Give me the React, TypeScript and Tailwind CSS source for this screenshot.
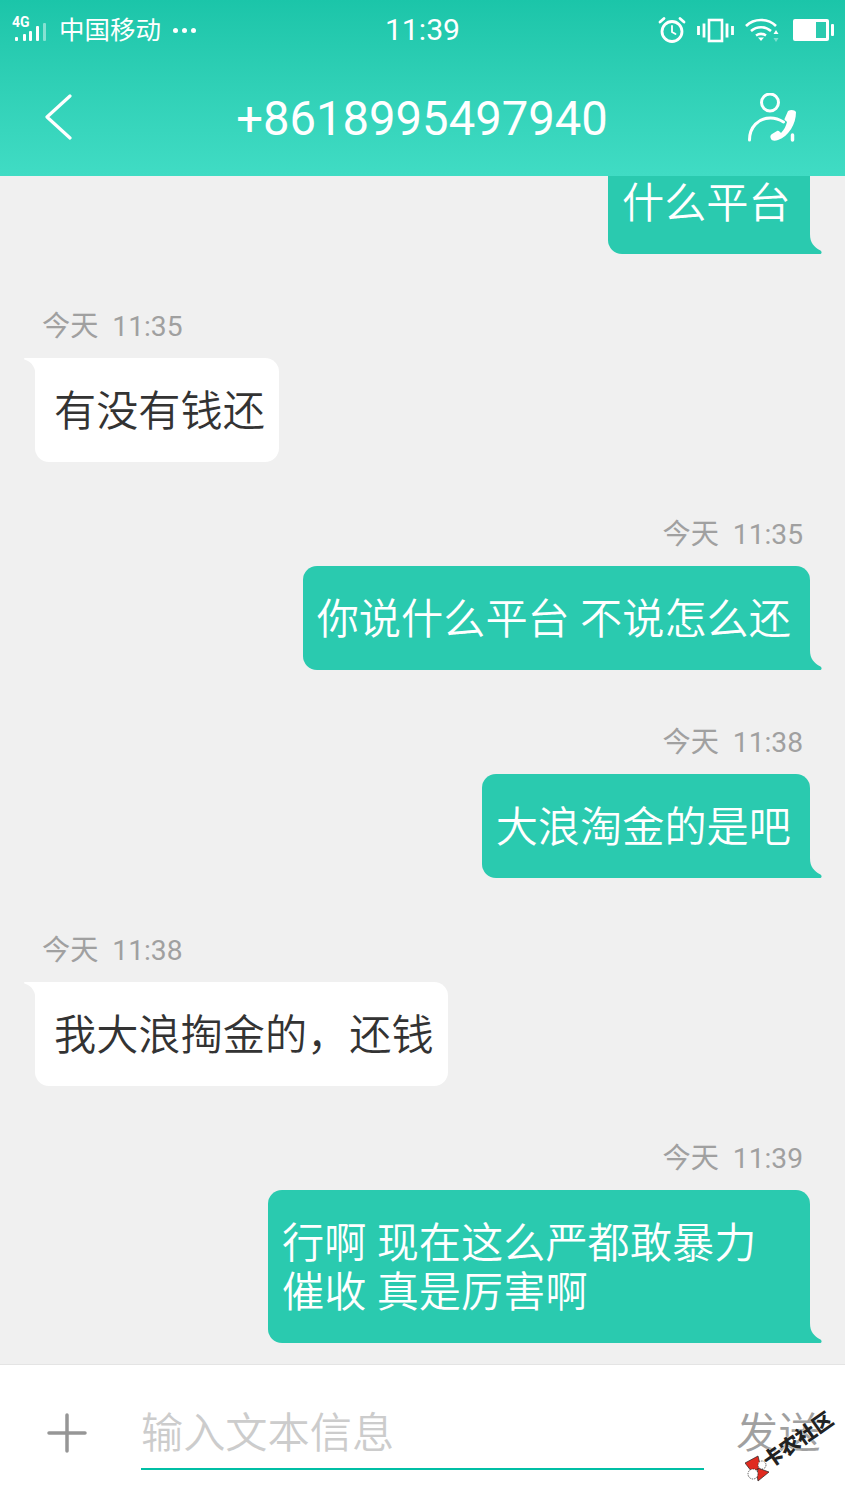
const cjk = "font-['Roboto','Noto_Sans_CJK_SC',sans-serif]";

const StatusLeft = () => (
  <div className="flex items-center">
    <div className="relative w-[36px] h-[26px] ml-[11px]">
      <span className="absolute left-[1px] -top-[3px] text-[14px] leading-[16px] font-bold text-white font-['Roboto',sans-serif]">4G</span>
      <svg width="36" height="26" viewBox="0 0 36 26" className="absolute left-0 top-0">
        <rect x="4" y="20" width="3" height="4" rx="1" fill="#fff" />
        <rect x="12" y="17" width="3" height="7" rx="1" fill="#fff" />
        <rect x="18" y="14" width="3" height="10" rx="1" fill="#fff" />
        <rect x="25" y="9" width="3" height="15" rx="1" fill="#fff" />
        <rect x="32" y="6" width="3" height="18" rx="1" fill="#fff" opacity=".45" />
      </svg>
    </div>
    <span className="ml-[12px] text-[25.5px] leading-[30px] text-white">中国移动</span>
    <div className="ml-[12px] flex gap-[4px]">
      <span className="w-[5px] h-[5px] rounded-full bg-white" />
      <span className="w-[5px] h-[5px] rounded-full bg-white" />
      <span className="w-[5px] h-[5px] rounded-full bg-white" />
    </div>
  </div>
);

const StatusRight = () => (
  <div className="flex items-center justify-end pr-[11px] gap-[11px]">
    <svg width="28" height="28" viewBox="0 0 28 28" fill="none" stroke="#fff" strokeLinecap="round" className="-ml-[1px]">
      <circle cx="14" cy="15.500" r="10" strokeWidth="2.800" />
      <path d="M14 10v6l3.500 2" strokeWidth="1.800" />
      <path d="M2 6l4-3.500M26 6l-4-3.500" strokeWidth="2.800" />
    </svg>
    <svg width="37" height="26" viewBox="0 0 37 26" fill="none" stroke="#fff">
      <rect x="12" y="3" width="13" height="21" strokeWidth="2.600" />
      <path d="M1.500 9v9M7 6.500v14M30 6.500v14M35.500 9v9" strokeWidth="2.800" />
    </svg>
    <svg width="36" height="26" viewBox="0 0 36 26" fill="none" stroke="#fff" strokeWidth="2.600" className="-ml-[1px]">
      <path d="M2 9C10 1 24 1 32 9" />
      <path d="M7 14c6-5 14-5 20 0" />
      <path d="M12 18.500c3-2 7-2 10 0" />
      <path d="M14 20.500h6l-3 3.500z" fill="#fff" stroke="none" />
      <path d="M32 13l2.500 4h-5z" fill="#fff" stroke="none" />
      <path d="M32 25l2.500-4h-5z" fill="#fff" opacity=".4" stroke="none" />
    </svg>
    <svg width="41" height="22" viewBox="0 0 41 22" className="ml-[2px]">
      <rect x="0" y="0" width="36" height="22" rx="2" fill="#fff" />
      <rect x="23" y="3" width="10" height="16" fill="#2acaaf" />
      <rect x="38" y="5" width="3" height="12" rx="1" fill="#fff" />
    </svg>
  </div>
);

const Header = () => (
  <header className="h-[176px] shrink-0 bg-gradient-to-b from-[#1bc5a9] to-[#40dcc4] text-white">
    <div className="h-[60px] grid grid-cols-3 items-center">
      <StatusLeft />
      <div className="text-center text-[30.2px] leading-[36px]">11:39</div>
      <StatusRight />
    </div>
    <div className="h-[116px] flex items-center justify-between pl-[45px] pr-[47px]">
      <div className="w-[50px] -mt-[2px]">
        <svg width="28" height="46" viewBox="0 0 28 46" fill="none" stroke="#fff" strokeWidth="3.200" strokeLinecap="round" strokeLinejoin="round">
          <path d="M25 2L2 23l23 21" />
        </svg>
      </div>
      <h1 className="text-[47.2px] leading-[56px] font-normal mt-[2px] ml-[1px]">+8618995497940</h1>
      <svg width="50" height="50" viewBox="0 0 50 50" fill="none" stroke="#fff" strokeWidth="3" strokeLinecap="round">
        <ellipse cx="22" cy="9.500" rx="8.500" ry="8.500" />
        <path d="M1.500 47c0-13 9-22 21-22 5 0 9 1.500 13 4" />
        <path d="M40 18c3-2 7-1 8 1 0 12-7 24-18 28-3 1-6 1-7-1-1-2-1-4 1-5l5-3c1-.500 2 0 3 1l1 1c3-3 5-7 6-11l-1-1c-1-.500-1.500-1-1.500-2z" fill="#fff" stroke="none" />
        <path d="M44.500 42v5" strokeWidth="3.500" />
      </svg>
    </div>
  </header>
);

type Msg = { side: "in" | "out"; time?: string; w?: string; lines: string[] };

const msgs: Msg[] = [
  { side: "out", w: "w-[202px]", lines: ["什么平台"] },
  { side: "in", time: "今天  11:35", lines: ["有没有钱还"] },
  { side: "out", time: "今天  11:35", lines: ["你说什么平台 不说怎么还"] },
  { side: "out", time: "今天  11:38", lines: ["大浪淘金的是吧"] },
  { side: "in", time: "今天  11:38", lines: ["我大浪掏金的，还钱"] },
  { side: "out", time: "今天  11:39", w: "w-[542px]", lines: ["行啊 现在这么严都敢暴力", "催收 真是厉害啊"] },
];

const Bubble = ({ m }: { m: Msg }) => {
  if (m.side === "in") {
    return (
      <div className="relative self-start ml-[35px] bg-white rounded-[14px] rounded-tl-none pl-[19px] pr-[14px] pt-[29px] pb-[26px] text-[#333] text-[42.2px] leading-[49px] font-[350]">
        <svg width="12" height="18" viewBox="0 0 12 18" className="absolute -left-[11px] top-0">
          <path d="M12 0H1C0 0-.5 1 .5 1.500 5 3 11 6 12 18z" fill="#fff" />
        </svg>
        {m.lines.map((l) => <div key={l} className="whitespace-pre">{l}</div>)}
      </div>
    );
  }
  return (
    <div className={`relative self-end mr-[35px] bg-[#2acaaf] rounded-[14px] rounded-br-none pl-[14px] pr-[19px] pt-[29px] pb-[26px] text-white text-[42.2px] leading-[49px] font-[350] ${m.w ?? ""}`}>
      <svg width="13" height="20" viewBox="0 0 13 20" className="absolute -right-[12px] bottom-0">
        <path d="M0 0h1c0 9 4 13 10.500 16.500 1.500 1 1.500 3.500-.5 3.500H0z" fill="#2acaaf" />
      </svg>
      {m.lines.map((l) => <div key={l} className="whitespace-pre">{l}</div>)}
    </div>
  );
};

const Input = () => (
  <footer className="relative h-[136px] shrink-0 bg-white border-t border-[#e4e4e4] flex items-start">
    <svg width="40" height="40" viewBox="0 0 40 40" stroke="#969696" strokeWidth="3.500" strokeLinecap="round" className="ml-[47px] mt-[48px] shrink-0">
      <path d="M20 2v36M2 20h36" />
    </svg>
    <div className="ml-[54px] w-[563px] h-[105px] border-b-2 border-[#00bfa5] pt-[44px]">
      <span className="text-[42.2px] leading-[50px] text-[#cccccc] font-[350]">输入文本信息</span>
    </div>
    <span className="ml-[32px] mt-[44px] text-[42.2px] leading-[50px] text-[#a0a0a0] font-[350]">发送</span>
    {/* watermark over the send button */}
    <svg width="26" height="28" viewBox="0 0 26 28" className="absolute left-[745px] top-[90px]">
      <path d="M0 8L13 1l3 12-9 4z" fill="#e02b20" stroke="#222" strokeWidth=".7" />
      <path d="M13 13l11 4-11 9-1-6z" fill="#e02b20" stroke="#222" strokeWidth=".7" />
      <circle cx="17" cy="10" r="4" fill="#fff" stroke="#222" strokeWidth=".7" strokeDasharray="1.500 1" />
      <circle cx="8" cy="19" r="5" fill="#fff" stroke="#222" strokeWidth=".7" strokeDasharray="1.500 1" />
    </svg>
    <div className="absolute left-[758px] top-[63px] -rotate-[35deg] text-[20px] leading-[24px] font-black text-[#222] whitespace-nowrap [text-shadow:0_0_2px_#fff]">
      卡农社区
    </div>
  </footer>
);

export default function App() {
  return (
    <div className={`w-[845px] h-[1500px] flex flex-col overflow-hidden bg-[#f0f0f0] ${cjk}`}>
      <Header />
      <main className="flex-1 overflow-hidden flex flex-col">
        {msgs.map((m, i) => (
          <div key={i} className={`flex flex-col ${i === 0 ? "-mt-[26px]" : "pt-[57px]"}`}>
            {m.time && (
              <div className={`h-[32px] mb-[15px] text-[28.2px] leading-[32px] text-[#a0a0a0] whitespace-pre ${m.side === "in" ? "pl-[42px]" : "self-end pr-[42px]"}`}>
                {m.time}
              </div>
            )}
            <Bubble m={m} />
          </div>
        ))}
      </main>
      <Input />
    </div>
  );
}
